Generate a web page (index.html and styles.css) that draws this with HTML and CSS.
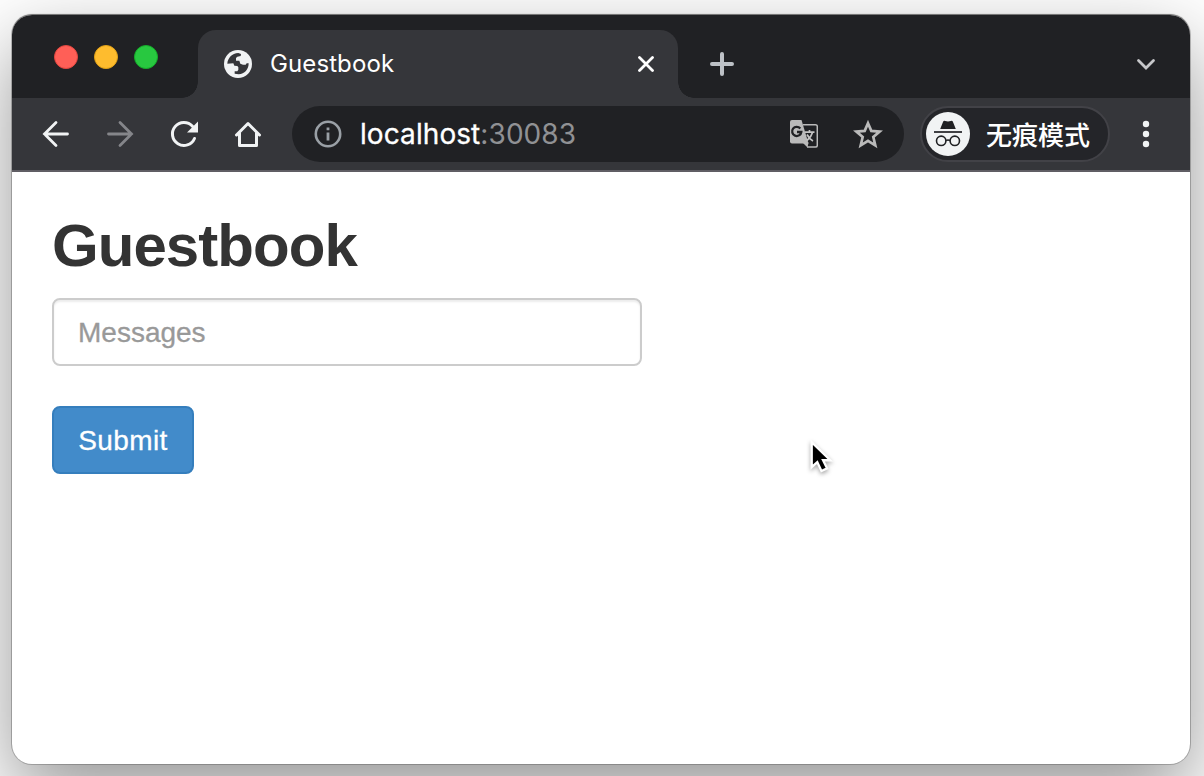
FILE: index.html
```html
<!DOCTYPE html>
<html lang="zh-CN">
<head>
<meta charset="utf-8">
<title>Guestbook</title>
<link rel="stylesheet" href="styles.css">
</head>
<body>
<div class="window">
  <header class="tabstrip">
    <div class="lights"><i class="light red"></i><i class="light yellow"></i><i class="light green"></i></div>
    <div class="tab">
      <svg class="globe" viewBox="0 0 84 84"><circle cx="42" cy="42" r="42" fill="#f1f3f4"/><path fill="#35363a" d="M10 41C11 24 24 10 43 9l8 3-1 6-10 2-4 4v8h10l3 9 8 3h8l3-4h6c0 18-12 32-30 33l-12-2v-7h8l3-5v-7l-3-4-9-1-3-7z"/></svg>
      <span class="tab-title">Guestbook</span>
      <svg class="close" viewBox="0 0 16 16"><path d="M1.500 1.500l13 13m0-13l-13 13" stroke="#fff" stroke-width="2.800" stroke-linecap="round"/></svg>
    </div>
    <svg class="plus" viewBox="0 0 24 24"><path d="M12 2v20M2 12h20" stroke="#bdc1c6" stroke-width="4" stroke-linecap="round"/></svg>
    <svg class="chevron" viewBox="0 0 20 14"><path d="M2.500 2.500l7.500 7.500 7.500-7.500" fill="none" stroke="#c6c7ca" stroke-width="2.800" stroke-linecap="round"/></svg>
  </header>
  <nav class="toolbar">
    <svg class="nav-icon" viewBox="0 0 32 32"><path d="M16 4.500L4.500 16 16 27.500M4.500 16h23" fill="none" stroke="#f1f3f4" stroke-width="2.800" stroke-linecap="round"/></svg>
    <svg class="nav-icon" viewBox="0 0 32 32"><path d="M16 4.500L27.500 16 16 27.500M27.500 16h-23" fill="none" stroke="#85868a" stroke-width="2.800" stroke-linecap="round"/></svg>
    <svg class="nav-icon" viewBox="0 0 32 32"><path d="M26.500 20.500A11.500 11.500 0 1 1 24.500 8.300" fill="none" stroke="#f1f3f4" stroke-width="3" stroke-linecap="round"/><path d="M30 3.500V14.500H19z" fill="#f1f3f4"/></svg>
    <svg class="nav-icon" viewBox="0 0 32 32"><path d="M4.500 17L16 5.500 27.500 17M7.500 15v12.600h17V15" fill="none" stroke="#f1f3f4" stroke-width="3" stroke-linecap="round" stroke-linejoin="round"/></svg>
    <div class="omnibox">
      <svg class="info" viewBox="0 0 28 28"><circle cx="14" cy="14" r="12.200" fill="none" stroke="#9aa0a6" stroke-width="2.600"/><path d="M12.600 12.500h2.800v8h-2.800zM12.600 7.500h2.800v2.800h-2.800z" fill="#9aa0a6"/></svg>
      <span class="url"><span class="host">localhost</span><span class="port">:30083</span></span>
      <svg class="translate" viewBox="0 0 28 28"><path d="M13 4.700h12.500a1.800 1.800 0 0 1 1.800 1.800v18.800a1.800 1.800 0 0 1-1.800 1.800H17" fill="none" stroke="#bababa" stroke-width="1.500"/><path d="M2 0h9.500l7 23.500H2a2 2 0 0 1-2-2V2a2 2 0 0 1 2-2z" fill="#bababa"/><path d="M18.500 22.500h-6l5 5z" fill="#bababa"/><path d="M10.300 8.500A4.600 4.600 0 1 0 11.300 12H7" fill="none" stroke="#202124" stroke-width="2.300"/><path d="M15 12.200h9.500M19.500 10v2M22.500 12.500c-1 3.500-3 6-5.500 8M17 14.500c1.500 3 4 5.500 6 6.500" fill="none" stroke="#c4c4c4" stroke-width="1.700"/></svg>
      <svg class="star" viewBox="0 0 30 30"><path d="M15 4.200l3.300 7.700 8.400.7-6.400 5.500 2 8.200-7.300-4.400-7.300 4.400 2-8.200-6.400-5.500 8.400-.7z" fill="none" stroke="#bababa" stroke-width="2.700"/></svg>
    </div>
    <div class="incognito">
      <svg class="spy" viewBox="0 0 44 44"><circle cx="22" cy="22" r="22" fill="#f1f3f4"/><path d="M14.200 17l3-7.500q.6-1.200 2-.6l2.800.7 2.800-.7q1.400-.6 2 .6l3 7.500z" fill="#202124"/><path d="M8 20h28" stroke="#202124" stroke-width="1.700"/><g fill="none" stroke="#202124" stroke-width="1.600"><circle cx="15.200" cy="28.800" r="4.700"/><circle cx="28.800" cy="28.800" r="4.700"/><path d="M20 28.500q2-1 4 0"/></g></svg>
      <span>无痕模式</span>
    </div>
    <svg class="dots" viewBox="0 0 8 28"><g fill="#f1f3f4"><circle cx="4" cy="4" r="3.200"/><circle cx="4" cy="14" r="3.200"/><circle cx="4" cy="24" r="3.200"/></g></svg>
  </nav>
  <main class="page">
    <h1 class="heading">Guestbook</h1>
    <input class="message" type="text" placeholder="Messages">
    <button class="submit" type="button">Submit</button>
  </main>
</div>
<svg class="cursor" viewBox="0 0 28 40"><path d="M4 4v27l6-5.500 4.500 9.500 6-2.800-4.300-8.700H24z" fill="#000" stroke="#fff" stroke-width="2.500"/></svg>
</body>
</html>
```
FILE: styles.css
```css
* { box-sizing: border-box; }
body { margin: 0; height: 776px; padding: 15px 14px 12px 12px; overflow: hidden; background: #fff; }
svg { display: block; flex: none; }
.window { height: 749px; border-radius: 20px; background: #fff; display: flex; flex-direction: column; box-shadow: 0 0 0 1px rgba(0,0,0,.2), 0 -1px 1px rgba(0,0,0,.4), 0 30px 80px rgba(0,0,0,.42); }
.tabstrip { height: 83px; padding: 15px 34px 0 42px; background: #202124; border-radius: 20px 20px 0 0; display: flex; }
.lights { display: flex; gap: 16px; padding-top: 15px; width: 144px; }
.light { width: 24px; height: 24px; border-radius: 50%; border: 1px solid; }
.red { background: #ff5f57; border-color: #e2463f; }
.yellow { background: #febc2e; border-color: #e1a116; }
.green { background: #28c840; border-color: #14ad29; }
.tab { position: relative; width: 480px; height: 68px; padding: 0 24px 0 26px; border-radius: 18px 18px 0 0; background: #35363a; display: flex; align-items: center; }
.tab::before, .tab::after { content: ""; position: absolute; bottom: 0; width: 16px; height: 16px; }
.tab::before { left: -16px; background: radial-gradient(circle at 0 0, transparent 15.500px, #35363a 16px); }
.tab::after { right: -16px; background: radial-gradient(circle at 100% 0, transparent 15.500px, #35363a 16px); }
.globe { width: 28px; height: 28px; }
.tab-title { flex: 1; margin-left: 18px; color: #fff; font: 400 24px/30px Inter, sans-serif; letter-spacing: .1px; }
.close { width: 16px; height: 16px; }
.plus { width: 24px; height: 24px; margin: 22px 0 0 32px; }
.chevron { width: 20px; height: 14px; margin: 28px 0 0 auto; }
.toolbar { height: 74px; padding: 0 40px 0 28px; background: #35363a; border-bottom: 2px solid #605e64; display: flex; align-items: center; }
.nav-icon { width: 32px; height: 32px; margin-right: 32px; }
.omnibox { width: 612px; height: 56px; margin-left: -4px; border-radius: 28px; padding: 0 21px 0 22px; background: #202124; display: flex; align-items: center; }
.info { width: 28px; height: 28px; }
.url { flex: 1; margin-left: 18px; color: #fff; font: 400 28px/36px Inter, sans-serif; letter-spacing: .08px; }
.host { -webkit-text-stroke: .3px #fff; }
.port { color: #909194; }
.translate { width: 28px; height: 28px; margin-right: 35px; }
.star { width: 30px; height: 30px; }
.incognito { width: 190px; height: 56px; margin-left: 16px; border: 2px solid #424247; border-radius: 28px; padding-left: 4px; background: #242529; color: #fff; font: 500 26px/36px "Noto Sans CJK SC", sans-serif; display: flex; align-items: center; gap: 16px; }
.spy { width: 44px; height: 44px; }
.dots { width: 8px; height: 28px; margin-left: auto; }
.page { flex: 1; padding: 41px 40px 40px; display: flex; flex-direction: column; align-items: flex-start; font-family: "Liberation Sans", Arial, sans-serif; }
.heading { margin: 0 0 19px; color: #333; font-size: 60px; line-height: 66px; font-weight: 700; letter-spacing: -.95px; }
.message { width: 590px; height: 68px; padding: 13px 24px 11px; border: 2px solid #ccc; border-radius: 8px; font: 28px/40px "Liberation Sans", Arial, sans-serif; background: #fff; box-shadow: inset 0 2px 2px rgba(0,0,0,.075); }
.message::placeholder { color: #999; opacity: 1; -webkit-text-stroke: .3px #999; }
.submit { width: 142px; height: 68px; margin-top: 40px; padding: 1px 0 0; border: 2px solid #357ebd; border-radius: 8px; background: #428bca; color: #fff; font: 28px/40px "Liberation Sans", Arial, sans-serif; letter-spacing: .4px; -webkit-text-stroke: .3px #fff; }
.cursor { position: absolute; left: 808px; top: 438px; width: 26px; height: 38px; filter: drop-shadow(0 2px 2px rgba(0,0,0,.35)); }
```
